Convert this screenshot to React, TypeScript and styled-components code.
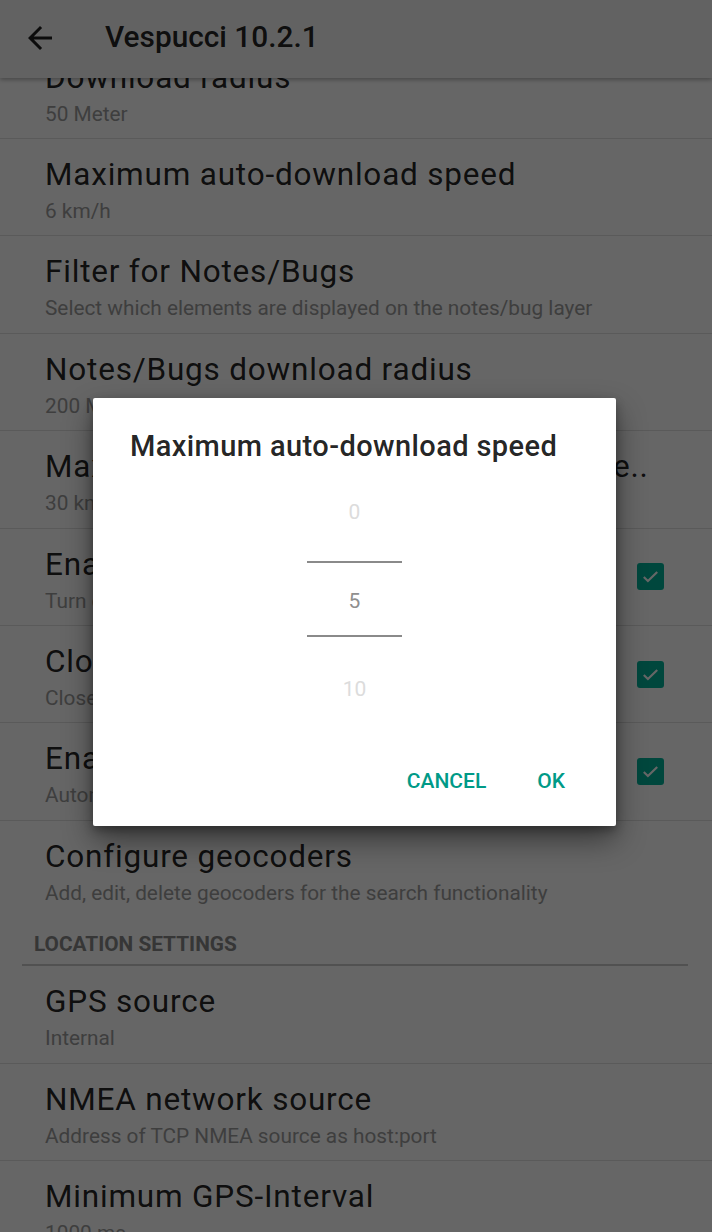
import React from "react";
import styled, { createGlobalStyle } from "styled-components";

const GlobalStyle = createGlobalStyle`
  html, body {
    margin: 0;
    padding: 0;
    width: 712px;
    height: 1232px;
    overflow: hidden;
    background: #ffffff;
    font-family: Roboto, "Noto Sans", "Liberation Sans", sans-serif;
  }
  * { box-sizing: border-box; }
`;

const Page = styled.div`
  position: relative;
  width: 712px;
  height: 1232px;
  overflow: hidden;
  background: #ffffff;
  display: flex;
  flex-direction: column;
`;

const AppBar = styled.header`
  position: relative;
  z-index: 2;
  flex: 0 0 78px;
  height: 78px;
  background: #f5f5f5;
  box-shadow: 0 2px 4px rgba(0, 0, 0, 0.28);
  display: flex;
  align-items: center;
  padding-left: 22px;
`;

const BackButton = styled.div`
  width: 36px;
  height: 36px;
  display: flex;
  align-items: center;
  justify-content: center;
  margin-top: -2px;
  color: rgba(0, 0, 0, 0.87);
`;

const AppTitle = styled.h1`
  margin: -4px 0 0 47px;
  font-size: 29.8px;
  line-height: 36px;
  font-weight: 500;
  color: rgba(0, 0, 0, 0.87);
`;

const List = styled.div`
  display: flex;
  flex-direction: column;
  margin-top: -36.4px;
`;

const Row = styled.div<{ $noBorder?: boolean; $padRight?: number }>`
  height: 97.4px;
  flex: 0 0 97.4px;
  display: flex;
  align-items: flex-start;
  padding: 0 ${(p) => p.$padRight ?? 24}px 0 45px;
  border-bottom: ${(p) => (p.$noBorder ? "none" : "1px solid #e2e2e2")};
`;

const RowText = styled.div`
  flex: 1;
  min-width: 0;
  display: flex;
  flex-direction: column;
  padding-top: 18px;
`;

const RowTitle = styled.div`
  font-size: 31.5px;
  letter-spacing: 0.8px;
  line-height: 36px;
  color: rgba(0, 0, 0, 0.87);
  white-space: nowrap;
  overflow: hidden;
`;

const RowSummary = styled.div`
  margin-top: 5px;
  font-size: 20.8px;
  line-height: 26px;
  color: #9c9c9c;
  white-space: nowrap;
  overflow: hidden;
`;

const CheckBox = styled.div`
  align-self: center;
  width: 27px;
  height: 27px;
  border-radius: 3px;
  background: #00b29a;
  display: flex;
  align-items: center;
  justify-content: center;
  margin-left: 16px;
`;

const Category = styled.div`
  height: 48px;
  flex: 0 0 48px;
  margin: 0 24px 0 22px;
  padding: 13px 0 0 12px;
  border-bottom: 2px solid #cacaca;
  font-size: 20.8px;
  line-height: 26px;
  font-weight: 700;
  color: #878787;
`;

const Scrim = styled.div`
  position: absolute;
  inset: 0;
  z-index: 5;
  background: rgba(0, 0, 0, 0.6);
  display: flex;
  align-items: flex-start;
  padding: 398px 0 0 93px;
`;

const Dialog = styled.div`
  width: 523px;
  height: 428px;
  background: #ffffff;
  border-radius: 2px;
  box-shadow: 0 14px 30px rgba(0, 0, 0, 0.45), 0 4px 10px rgba(0, 0, 0, 0.3);
  display: flex;
  flex-direction: column;
  padding: 31px 0 0 0;
`;

const DialogTitle = styled.div`
  padding-left: 37px;
  font-size: 29px;
  letter-spacing: 0.4px;
  line-height: 34px;
  font-weight: 500;
  color: rgba(0, 0, 0, 0.87);
  white-space: nowrap;
`;

const Picker = styled.div`
  align-self: center;
  width: 95px;
  display: flex;
  flex-direction: column;
`;

const PickerCell = styled.div<{ $h: number; $selected?: boolean; $shift?: number }>`
  height: ${(p) => p.$h}px;
  display: flex;
  align-items: center;
  justify-content: center;
  padding-top: ${(p) => p.$shift ?? 0}px;
  font-size: 21px;
  color: ${(p) => (p.$selected ? "#8f8f8f" : "#dcdcdc")};
`;

const PickerDivider = styled.div`
  height: 2px;
  background: #8a8a8a;
`;

const Actions = styled.div`
  margin-top: 16px;
  height: 48px;
  display: flex;
  justify-content: flex-end;
  align-items: center;
  gap: 19px;
  padding-right: 35px;
`;

const TextButton = styled.div`
  height: 48px;
  padding: 0 16px;
  display: flex;
  align-items: center;
  font-size: 21px;
  font-weight: 500;
  color: #009a87;
  text-transform: uppercase;
`;

const BackArrow = () => (
  <svg width="36" height="36" viewBox="0 0 24 24" fill="currentColor">
    <path d="M20 11H7.83l5.59-5.59L12 4l-8 8 8 8 1.41-1.41L7.83 13H20v-2z" />
  </svg>
);

const Check = () => (
  <svg width="23" height="23" viewBox="0 0 24 24" fill="none">
    <path d="M5 12.5l4.3 4.3L19 7.2" stroke="#ffffff" strokeWidth="2.2" />
  </svg>
);

type Pref = { title: string; summary: string; checked?: boolean; padRight?: number; noBorder?: boolean };

const top: Pref[] = [
  { title: "Download radius", summary: "50 Meter" },
  { title: "Maximum auto-download speed", summary: "6 km/h" },
  { title: "Filter for Notes/Bugs", summary: "Select which elements are displayed on the notes/bug layer" },
  { title: "Notes/Bugs download radius", summary: "200 Meter" },
  { title: "Maximum Note/Bug auto-download spe..", summary: "30 km/h", padRight: 24 },
  { title: "Enable auto-download of Notes/Bugs", summary: "Turn on automatic download of notes", checked: true },
  { title: "Close changeset on upload", summary: "Close the changeset after each upload", checked: true },
  { title: "Enable auto-apply of presets", summary: "Automatically apply best matching preset", checked: true },
  { title: "Configure geocoders", summary: "Add, edit, delete geocoders for the search functionality", noBorder: true },
];

const bottom: Pref[] = [
  { title: "GPS source", summary: "Internal" },
  { title: "NMEA network source", summary: "Address of TCP NMEA source as host:port" },
  { title: "Minimum GPS-Interval", summary: "1000 ms" },
];

const PrefRow = ({ p }: { p: Pref }) => (
  <Row $noBorder={p.noBorder} $padRight={p.checked ? 48 : p.padRight}>
    <RowText>
      <RowTitle>{p.title}</RowTitle>
      <RowSummary>{p.summary}</RowSummary>
    </RowText>
    {p.checked && (
      <CheckBox>
        <Check />
      </CheckBox>
    )}
  </Row>
);

export default function App() {
  return (
    <>
      <GlobalStyle />
      <Page>
        <AppBar>
          <BackButton>
            <BackArrow />
          </BackButton>
          <AppTitle>Vespucci 10.2.1</AppTitle>
        </AppBar>
        <List>
          {top.map((p) => (
            <PrefRow key={p.title} p={p} />
          ))}
          <Category>LOCATION SETTINGS</Category>
          {bottom.map((p) => (
            <PrefRow key={p.title} p={p} />
          ))}
        </List>
        <Scrim>
          <Dialog>
            <DialogTitle>Maximum auto-download speed</DialogTitle>
            <Picker>
              <PickerCell $h={98}>0</PickerCell>
              <PickerDivider />
              <PickerCell $h={72} $shift={4} $selected>
                5
              </PickerCell>
              <PickerDivider />
              <PickerCell $h={104}>10</PickerCell>
            </Picker>
            <Actions>
              <TextButton>Cancel</TextButton>
              <TextButton>OK</TextButton>
            </Actions>
          </Dialog>
        </Scrim>
      </Page>
    </>
  );
}
